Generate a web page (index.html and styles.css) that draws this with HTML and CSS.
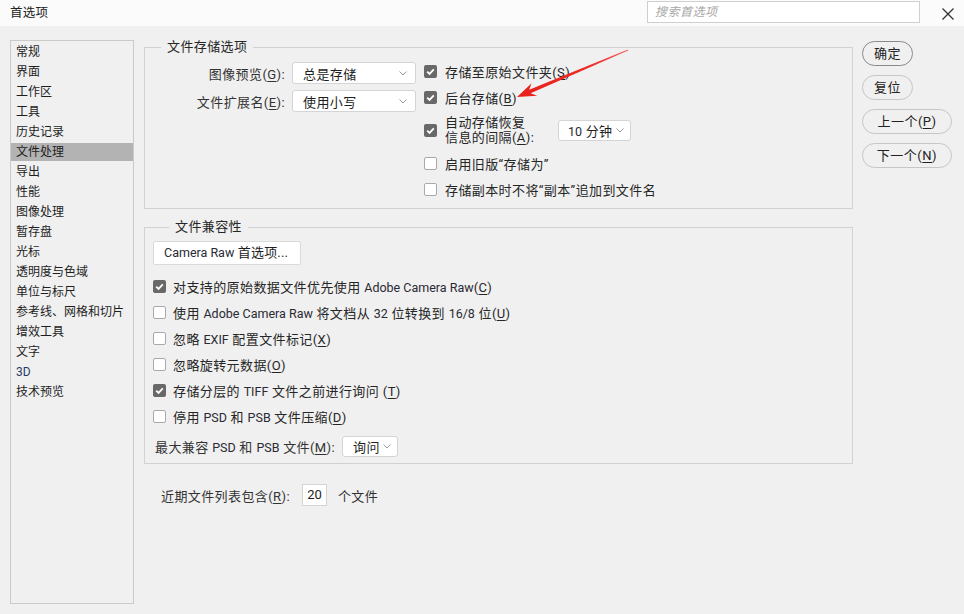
FILE: index.html
```html
<!DOCTYPE html>
<html lang="zh-CN">
<head>
<meta charset="utf-8">
<title>首选项</title>
<link rel="stylesheet" href="styles.css">
</head>
<body>
<header class="titlebar">
  <div class="title">首选项</div>
  <div class="search">搜索首选项</div>
  <svg class="close" width="12" height="12" viewBox="0 0 12 12"><path d="M0.5 0.5 L11.5 11.5 M11.5 0.5 L0.5 11.5" stroke="#333" stroke-width="1.3" fill="none"/></svg>
</header>
<div class="content">
  <nav class="sidebar">
    <div class="item">常规</div>
    <div class="item">界面</div>
    <div class="item">工作区</div>
    <div class="item">工具</div>
    <div class="item">历史记录</div>
    <div class="item active">文件处理</div>
    <div class="item">导出</div>
    <div class="item">性能</div>
    <div class="item">图像处理</div>
    <div class="item">暂存盘</div>
    <div class="item">光标</div>
    <div class="item">透明度与色域</div>
    <div class="item">单位与标尺</div>
    <div class="item">参考线、网格和切片</div>
    <div class="item">增效工具</div>
    <div class="item">文字</div>
    <div class="item latin">3D</div>
    <div class="item">技术预览</div>
  </nav>
  <main class="main">
    <fieldset class="group group-save">
      <legend>文件存储选项</legend>
      <div class="save-grid">
        <div class="save-left">
          <div class="field">
            <span class="label">图像预览(<u>G</u>):</span>
            <div class="select select-wide"><span>总是存储</span><svg class="chev" width="8" height="5" viewBox="0 0 8 5"><path d="M0.5 0.5 L4 4 L7.5 0.5" stroke="#9a9a9a" fill="none"/></svg></div>
          </div>
          <div class="field">
            <span class="label">文件扩展名(<u>E</u>):</span>
            <div class="select select-wide"><span>使用小写</span><svg class="chev" width="8" height="5" viewBox="0 0 8 5"><path d="M0.5 0.5 L4 4 L7.5 0.5" stroke="#9a9a9a" fill="none"/></svg></div>
          </div>
        </div>
        <div class="save-right">
          <div class="check-row">
            <span class="cb on"><svg width="13" height="13" viewBox="0 0 13 13"><path d="M3.2 6.6 L5.5 8.9 L9.8 4.3" stroke="#fff" stroke-width="1.8" fill="none"/></svg></span>
            <span>存储至原始文件夹(<u>S</u>)</span>
          </div>
          <div class="check-row">
            <span class="cb on"><svg width="13" height="13" viewBox="0 0 13 13"><path d="M3.2 6.6 L5.5 8.9 L9.8 4.3" stroke="#fff" stroke-width="1.8" fill="none"/></svg></span>
            <span>后台存储(<u>B</u>)</span>
          </div>
          <div class="check-row tall">
            <span class="cb on"><svg width="13" height="13" viewBox="0 0 13 13"><path d="M3.2 6.6 L5.5 8.9 L9.8 4.3" stroke="#fff" stroke-width="1.8" fill="none"/></svg></span>
            <span class="two-line"><span class="ln">自动存储恢复</span><span class="ln">信息的间隔(<u>A</u>):</span></span>
            <div class="select select-min"><span><span class="lt">10</span> 分钟</span><svg class="chev" width="8" height="5" viewBox="0 0 8 5"><path d="M0.5 0.5 L4 4 L7.5 0.5" stroke="#9a9a9a" fill="none"/></svg></div>
          </div>
          <div class="check-row">
            <span class="cb"></span>
            <span>启用旧版“存储为”</span>
          </div>
          <div class="check-row">
            <span class="cb"></span>
            <span>存储副本时不将“副本”追加到文件名</span>
          </div>
        </div>
      </div>
    </fieldset>

    <fieldset class="group group-compat">
      <legend>文件兼容性</legend>
      <div class="raw-btn"><span class="lt">Camera Raw</span> 首选项...</div>
      <div class="compat-rows">
        <div class="check-row">
          <span class="cb on"><svg width="13" height="13" viewBox="0 0 13 13"><path d="M3.2 6.6 L5.5 8.9 L9.8 4.3" stroke="#fff" stroke-width="1.8" fill="none"/></svg></span>
          <span>对支持的原始数据文件优先使用 <span class="lt">Adobe Camera Raw</span>(<u>C</u>)</span>
        </div>
        <div class="check-row">
          <span class="cb"></span>
          <span>使用 <span class="lt">Adobe Camera Raw</span> 将文档从 <span class="lt">32</span> 位转换到 <span class="lt">16/8</span> 位(<u>U</u>)</span>
        </div>
        <div class="check-row">
          <span class="cb"></span>
          <span>忽略 <span class="lt">EXIF</span> 配置文件标记(<u>X</u>)</span>
        </div>
        <div class="check-row">
          <span class="cb"></span>
          <span>忽略旋转元数据(<u>O</u>)</span>
        </div>
        <div class="check-row">
          <span class="cb on"><svg width="13" height="13" viewBox="0 0 13 13"><path d="M3.2 6.6 L5.5 8.9 L9.8 4.3" stroke="#fff" stroke-width="1.8" fill="none"/></svg></span>
          <span>存储分层的 <span class="lt">TIFF</span> 文件之前进行询问 (<u>T</u>)</span>
        </div>
        <div class="check-row">
          <span class="cb"></span>
          <span>停用 <span class="lt">PSD</span> 和 <span class="lt">PSB</span> 文件压缩(<u>D</u>)</span>
        </div>
        <div class="max-row">
          <span>最大兼容 <span class="lt">PSD</span> 和 <span class="lt">PSB</span> 文件(<u>M</u>):</span>
          <div class="select select-ask"><span>询问</span><svg class="chev" width="8" height="5" viewBox="0 0 8 5"><path d="M0.5 0.5 L4 4 L7.5 0.5" stroke="#9a9a9a" fill="none"/></svg></div>
        </div>
      </div>
    </fieldset>

    <div class="recent-row">
      <span>近期文件列表包含(<u>R</u>):</span>
      <div class="num-input">20</div>
      <span>个文件</span>
    </div>
  </main>
  <aside class="buttons">
    <div class="btn btn-default">确定</div>
    <div class="btn">复位</div>
    <div class="btn btn-wide">上一个(<u>P</u>)</div>
    <div class="btn btn-wide">下一个(<u>N</u>)</div>
  </aside>
</div>
<svg class="arrow" width="964" height="614" viewBox="0 0 964 614">
  <defs>
    <linearGradient id="ag" x1="628" y1="50" x2="517" y2="97" gradientUnits="userSpaceOnUse">
      <stop offset="0" stop-color="#f46a6a"/>
      <stop offset="0.35" stop-color="#ee2b26"/>
      <stop offset="1" stop-color="#e8211b"/>
    </linearGradient>
  </defs>
  <polygon points="627.8,49.6 529.2,89.8 531.6,83.2 517,97 537.2,95.8 530.6,93.2 628.2,50.4" fill="url(#ag)"/>
</svg>
</body>
</html>
```

FILE: styles.css
```css
* {
  box-sizing: border-box;
}

html, body {
  margin: 0;
  padding: 0;
}

body {
  width: 964px;
  height: 614px;
  background: #f0f0f0;
  font-family: Roboto, "Noto Sans CJK SC", sans-serif;
  font-size: 13px;
  color: #262626;
  position: relative;
  overflow: hidden;
}

u {
  text-decoration: underline;
  text-underline-offset: 2px;
}

.lt {
  letter-spacing: 0;
  font-size: 12.5px;
  color: #2a2a34;
}

/* Title bar */
.titlebar {
  height: 26px;
  background: #fbfbfb;
  display: flex;
  align-items: flex-start;
  padding-left: 10px;
}

.title {
  flex: 1;
  font-size: 12.5px;
  line-height: 26px;
  letter-spacing: 0.3px;
  color: #222;
}

.search {
  width: 273px;
  height: 22px;
  margin-top: 1px;
  background: #fff;
  border: 1px solid #cfcfcf;
  font-size: 12px;
  font-style: italic;
  color: #a8a8a8;
  line-height: 20px;
  padding-left: 7px;
  letter-spacing: 0.5px;
}

.close {
  margin: 8px 10px 0 22px;
}

/* Content */
.content {
  display: flex;
  align-items: flex-start;
  padding-top: 12px;
}

.sidebar {
  width: 124px;
  height: 564px;
  margin: 2px 0 0 10px;
  border: 1px solid #cacaca;
  padding-top: 2px;
  font-size: 12px;
}

.item {
  height: 18px;
  line-height: 18px;
  margin-bottom: 2px;
  padding-left: 5px;
  color: #1e1e1e;
  white-space: nowrap;
}

.item.active {
  background: #b3b3b3;
}

.item.latin {
  color: #2b3c64;
}

.main {
  width: 709px;
  margin-left: 10px;
  letter-spacing: 0.4px;
}

.group {
  margin: 0;
  padding: 0;
  border: 1px solid #d2d2d2;
  min-inline-size: 0;
}

.group legend {
  margin-left: 16px;
  padding: 0 6px;
  line-height: 18px;
  height: 18px;
  color: #262626;
}

/* file save */
.save-grid {
  display: flex;
  padding: 2px 0 6px 0;
  gap: 8px;
}

.save-left {
  width: 271px;
  padding-top: 4px;
  display: flex;
  flex-direction: column;
  gap: 6px;
}

.field {
  display: flex;
  align-items: center;
  gap: 7px;
}

.label {
  width: 140px;
  text-align: right;
  color: #333;
}

.select {
  height: 22px;
  background: #fff;
  border: 1px solid #d4d4d4;
  border-radius: 3px;
  display: flex;
  align-items: center;
  justify-content: space-between;
  padding: 0 8px 0 10px;
  color: #1e1e1e;
}

.select-wide {
  width: 124px;
}

.select-min {
  width: 73px;
  height: 21px;
  padding-left: 9px;
  padding-right: 6px;
}

.select-ask {
  width: 56px;
  height: 21px;
  padding-left: 10px;
  padding-right: 6px;
}

.save-right {
  flex: 1;
  display: flex;
  flex-direction: column;
}

.check-row {
  height: 26px;
  display: flex;
  align-items: center;
  gap: 8px;
  white-space: nowrap;
}

.check-row.tall {
  height: 40px;
}

.two-line {
  width: 105px;
  display: flex;
  flex-direction: column;
}

.two-line .ln {
  height: 15px;
  line-height: 15px;
}

.cb {
  width: 13px;
  height: 13px;
  flex: none;
  border: 1px solid #a9a9a9;
  border-radius: 2px;
  background: #fff;
  display: flex;
  align-items: center;
  justify-content: center;
}

.cb svg {
  display: block;
}

.cb.on {
  border: none;
  background: #686868;
}

/* compat */
.group-compat {
  margin-top: 9px;
  padding: 0 0 4px 8px;
}

.raw-btn {
  width: 148px;
  height: 24px;
  margin-top: 5px;
  background: #fff;
  border: 1px solid #dadada;
  border-radius: 2px;
  line-height: 22px;
  padding-left: 10px;
  color: #1e1e1e;
  letter-spacing: 0.2px;
}

.compat-rows {
  margin-top: 8px;
}

.compat-rows .check-row {
  gap: 7px;
}

.max-row {
  height: 26px;
  margin-top: 4px;
  padding-left: 2px;
  display: flex;
  align-items: center;
  gap: 7px;
  color: #333;
}

.recent-row {
  margin-top: 20px;
  padding-left: 17px;
  display: flex;
  align-items: center;
  height: 22px;
  color: #333;
}

.num-input {
  width: 25px;
  height: 22px;
  margin: 0 11px 0 12px;
  background: #fff;
  border: 1px solid #d4d4d4;
  line-height: 20px;
  text-align: center;
  color: #1e1e1e;
  letter-spacing: 0;
}

/* buttons */
.buttons {
  margin: 3px 0 0 9px;
  display: flex;
  flex-direction: column;
  align-items: flex-start;
  gap: 9px;
}

.btn {
  width: 51px;
  height: 25px;
  border: 1px solid #c6c6c6;
  border-radius: 13px;
  text-align: center;
  line-height: 23px;
  color: #222;
  letter-spacing: 0.5px;
}

.btn-default {
  border-color: #8a8a8a;
}

.btn-wide {
  width: 90px;
}

/* annotation arrow overlay */
.arrow {
  position: absolute;
  left: 0;
  top: 0;
  pointer-events: none;
}
```
